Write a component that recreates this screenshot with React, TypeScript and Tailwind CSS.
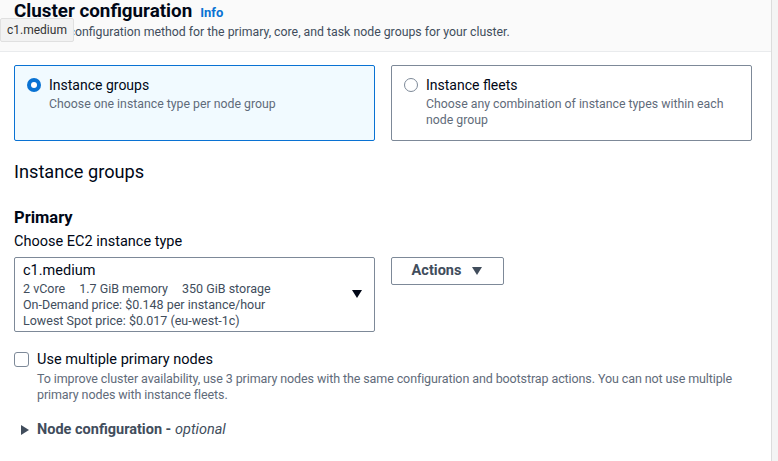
import React from "react";

function Radio({ checked }: { checked: boolean }) {
  return checked ? (
    <span className="mt-[2px] flex h-[14px] w-[14px] shrink-0 items-center justify-center rounded-full bg-[#0972d3]">
      <span className="h-[6px] w-[6px] rounded-full bg-white" />
    </span>
  ) : (
    <span className="mt-[2px] h-[14px] w-[14px] shrink-0 rounded-full border border-[#7d8998] bg-white" />
  );
}

export default function App() {
  return (
    <div
      className="relative h-[461px] w-[778px] overflow-hidden bg-white text-[#000716]"
      style={{ fontFamily: 'Roboto, "Noto Sans", sans-serif' }}
    >
      <div className="flex h-full">
        <div className="flex-1">
          <div className="h-[52px] border-b border-[#e9ebed] bg-[#fafafa] px-[14px] pt-[0px]">
            <div className="flex items-baseline gap-[8px]">
              <h1 className="text-[18.8px] font-bold leading-[23px] text-[#000716]">Cluster configuration</h1>
              <span className="text-[13px] font-bold text-[#0972d3]">Info</span>
            </div>
            <p className="mt-[1px] text-[12.3px] leading-[16px] text-[#414d5c]">
              Choose a configuration method for the primary, core, and task node groups for your cluster.
            </p>
          </div>

          <div className="px-[14px] pt-[13px]">
            <div className="grid grid-cols-2 gap-[16px] pr-[5px]">
              <div className="flex h-[76px] gap-[8px] rounded-[2px] border border-[#0972d3] bg-[#f1faff] px-[12px] py-[10px]">
                <Radio checked />
                <div>
                  <div className="text-[14px] leading-[18px]">Instance groups</div>
                  <div className="mt-[2px] text-[12.3px] leading-[16px] text-[#5f6b7a]">
                    Choose one instance type per node group
                  </div>
                </div>
              </div>
              <div className="flex h-[76px] gap-[8px] rounded-[2px] border border-[#7d8998] bg-white px-[12px] py-[10px]">
                <Radio checked={false} />
                <div>
                  <div className="text-[14px] leading-[18px]">Instance fleets</div>
                  <div className="mt-[2px] text-[12.3px] leading-[16px] text-[#5f6b7a]">
                    Choose any combination of instance types within each node group
                  </div>
                </div>
              </div>
            </div>

            <h2 className="mt-[19px] text-[18.2px] leading-[24px]">Instance groups</h2>
            <h3 className="mt-[23px] text-[16.5px] font-bold leading-[22px]">Primary</h3>
            <div className="mt-[3px] text-[14.5px] leading-[20px]">Choose EC2 instance type</div>

            <div className="mt-[5px] flex items-start gap-[16px]">
              <div className="flex h-[75px] w-[361px] items-start rounded-[2px] border border-[#7d8998] px-[8px] pt-[4px]">
                <div className="flex-1">
                  <div className="mb-[1px] text-[14.5px] leading-[18px]">c1.medium</div>
                  <div className="text-[12.5px] leading-[16px] text-[#414d5c]">
                    2 vCore<span className="inline-block w-[14px]" />1.7 GiB memory<span className="inline-block w-[14px]" />350 GiB storage
                  </div>
                  <div className="text-[12.5px] leading-[16px] text-[#414d5c]">On-Demand price: $0.148 per instance/hour</div>
                  <div className="text-[12.5px] leading-[16px] text-[#414d5c]">Lowest Spot price: $0.017 (eu-west-1c)</div>
                </div>
                <svg width="12" height="10" viewBox="0 0 12 10" className="mr-[3px] mt-[27px]">
                  <path d="M1 1h10L6 9z" fill="#000716" />
                </svg>
              </div>
              <button className="flex h-[28px] w-[113px] items-center justify-center gap-[10px] rounded-[2px] border border-[#7d8998] bg-white text-[14.5px] font-bold text-[#414d5c]">
                Actions
                <svg width="12" height="10" viewBox="0 0 12 10">
                  <path d="M1 1h10L6 9z" fill="#414d5c" />
                </svg>
              </button>
            </div>

            <div className="mt-[19px] flex gap-[8px]">
              <span className="mt-[1px] h-[15px] w-[15px] shrink-0 rounded-[3px] border border-[#7d8998] bg-white" />
              <div>
                <div className="text-[14.5px] leading-[18px]">Use multiple primary nodes</div>
                <div className="mt-[2px] text-[12.5px] leading-[16px] tracking-[-0.1px] text-[#5f6b7a]">
                  To improve cluster availability, use 3 primary nodes with the same configuration and bootstrap actions. You can not use multiple primary nodes with instance fleets.
                </div>
              </div>
            </div>

            <div className="mt-[16px] flex items-center gap-[7px] pl-[6px]">
              <svg width="10" height="12" viewBox="0 0 10 12">
                <path d="M1 1v10l8-5z" fill="#414d5c" />
              </svg>
              <span className="text-[14.5px] font-bold text-[#414d5c]">
                Node configuration - <i className="font-normal">optional</i>
              </span>
            </div>
          </div>
        </div>
        <div className="w-[7px] border-l border-[#dcdcdc] bg-[#f4f4f4]" />
      </div>

      <div className="absolute left-0 top-[18px] rounded-[2px] border border-[#e0e0e0] bg-[#f2f2f2] px-[6px] py-[3px] text-[12px] leading-[16px] text-[#333]">
        c1.medium
      </div>
    </div>
  );
}
